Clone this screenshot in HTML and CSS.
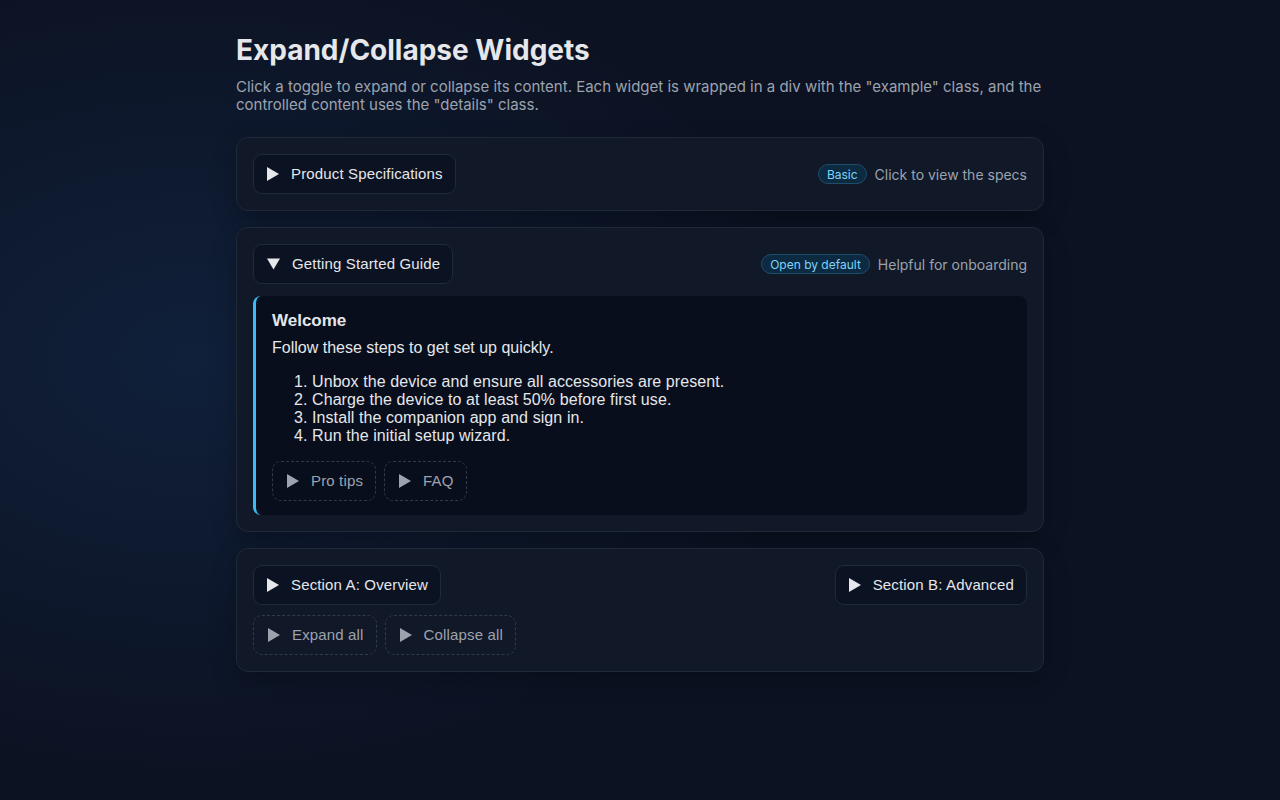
FILE: index.html
```html
<!DOCTYPE html>
<html lang="en">
<head>
    <meta charset="UTF-8">
    <meta name="viewport" content="width=device-width, initial-scale=1.0">
    <title>Expand/Collapse Widgets</title>
    <link rel="stylesheet" href="styles.css">
</head>
<body>
    <div class="page">
        <h1>Expand/Collapse Widgets</h1>
        <p class="intro">Click a toggle to expand or collapse its content. Each widget is wrapped in a div with the "example" class, and the controlled content uses the "details" class.</p>

        <!-- widget 1 -->
        <div class="example">
            <div class="example-head">
                <button class="toggle">
                    <svg class="arrow" viewBox="0 0 12 14"><polygon points="0,0 12,7 0,14"/></svg>
                    Product Specifications
                </button>
                <div class="meta">
                    <span class="badge">Basic</span>
                    <span class="hint">Click to view the specs</span>
                </div>
            </div>
        </div>

        <!-- widget 2 -->
        <div class="example">
            <div class="example-head">
                <button class="toggle">
                    <svg class="arrow down" viewBox="0 0 14 12"><polygon points="0,0 14,0 7,12"/></svg>
                    Getting Started Guide
                </button>
                <div class="meta">
                    <span class="badge">Open by default</span>
                    <span class="hint">Helpful for onboarding</span>
                </div>
            </div>
            <div class="details">
                <h4>Welcome</h4>
                <p>Follow these steps to get set up quickly.</p>
                <ol>
                    <li>Unbox the device and ensure all accessories are present.</li>
                    <li>Charge the device to at least 50% before first use.</li>
                    <li>Install the companion app and sign in.</li>
                    <li>Run the initial setup wizard.</li>
                </ol>
                <div class="row">
                    <button class="toggle ghost">
                        <svg class="arrow" viewBox="0 0 12 14"><polygon points="0,0 12,7 0,14"/></svg>
                        Pro tips
                    </button>
                    <button class="toggle ghost">
                        <svg class="arrow" viewBox="0 0 12 14"><polygon points="0,0 12,7 0,14"/></svg>
                        FAQ
                    </button>
                </div>
            </div>
        </div>

        <!-- widget 3 -->
        <div class="example">
            <div class="example-head">
                <button class="toggle">
                    <svg class="arrow" viewBox="0 0 12 14"><polygon points="0,0 12,7 0,14"/></svg>
                    Section A: Overview
                </button>
                <button class="toggle">
                    <svg class="arrow" viewBox="0 0 12 14"><polygon points="0,0 12,7 0,14"/></svg>
                    Section B: Advanced
                </button>
            </div>
            <div class="row tight">
                <button class="toggle ghost">
                    <svg class="arrow" viewBox="0 0 12 14"><polygon points="0,0 12,7 0,14"/></svg>
                    Expand all
                </button>
                <button class="toggle ghost">
                    <svg class="arrow" viewBox="0 0 12 14"><polygon points="0,0 12,7 0,14"/></svg>
                    Collapse all
                </button>
            </div>
        </div>
    </div>
</body>
</html>
```

FILE: styles.css
```css
html {
    height: 100%;
}
body {
    margin: 0;
    min-height: 100%;
    font-family: Inter, "Noto Sans", sans-serif;
    color: #e5e7eb;
    background: #0c1222;
    background-image: radial-gradient(ellipse 900px 600px at 15% 45%, #10203a 0%, rgba(12, 18, 34, 0) 70%);
    background-attachment: fixed;
}
.page {
    width: 808px;
    margin: 0 auto;
    padding: 33px 0 40px;
}
h1 {
    margin: 0 0 11px;
    font-size: 28px;
    line-height: 34px;
    font-weight: 700;
    color: #e5e7eb;
}
.intro {
    margin: 0 0 23px;
    font-size: 15px;
    line-height: 18px;
    color: #9ca3af;
}
/* widget card */
.example {
    background: #111827;
    border: 1px solid #1f2937;
    border-radius: 12px;
    padding: 16px;
    margin-bottom: 16px;
    box-shadow: 0 8px 24px rgba(0, 0, 0, 0.25);
}
.example-head {
    display: flex;
    justify-content: space-between;
    align-items: center;
}
.meta {
    display: flex;
    align-items: center;
    gap: 8px;
}
.badge {
    font-size: 12px;
    line-height: 16px;
    padding: 2px 8px 0;
    border-radius: 999px;
    background: #0c2b43;
    border: 1px solid #1d4d6b;
    color: #7dd3fc;
}
.hint {
    font-size: 14px;
    color: #9ca3af;
}
/* toggles */
.toggle {
    display: inline-flex;
    align-items: center;
    gap: 12px;
    padding: 10px 12px 10px 13px;
    font-family: "Liberation Sans", Arial, sans-serif;
    font-size: 15px;
    line-height: 18px;
    letter-spacing: 0.15px;
    color: #e5e7eb;
    background: #0b1222;
    border: 1px solid #1f2a3a;
    border-radius: 9px;
    cursor: pointer;
}
.toggle .arrow {
    width: 12px;
    height: 14px;
    fill: #e5e7eb;
}
.toggle .arrow.down {
    width: 13px;
    height: 12px;
}
.toggle.ghost {
    padding: 11px 12px 11px 14px;
    line-height: 16px;
    color: #9ca3af;
    background: transparent;
    border: 1px dashed #2f3a4b;
}
.toggle.ghost .arrow {
    fill: #9ca3af;
}
.row {
    display: flex;
    gap: 8px;
}
.row.tight {
    margin-top: 10px;
}
/* controlled content */
.details {
    margin-top: 12px;
    padding: 15px 16px 14px 16px;
    background: #090e1c;
    border-left: 3px solid #38bdf8;
    border-radius: 8px;
    font-family: "Liberation Sans", Arial, sans-serif;
    color: #e5e7eb;
}
.details h4 {
    margin: 0 0 7px;
    font-size: 17px;
    line-height: 20px;
    font-weight: 700;
}
.details p {
    margin: 0;
    font-size: 16px;
    line-height: 20px;
}
.details ol {
    margin: 15px 0 16px;
    padding-left: 40px;
    font-size: 16px;
    line-height: 18px;
    letter-spacing: 0.09px;
}
```
